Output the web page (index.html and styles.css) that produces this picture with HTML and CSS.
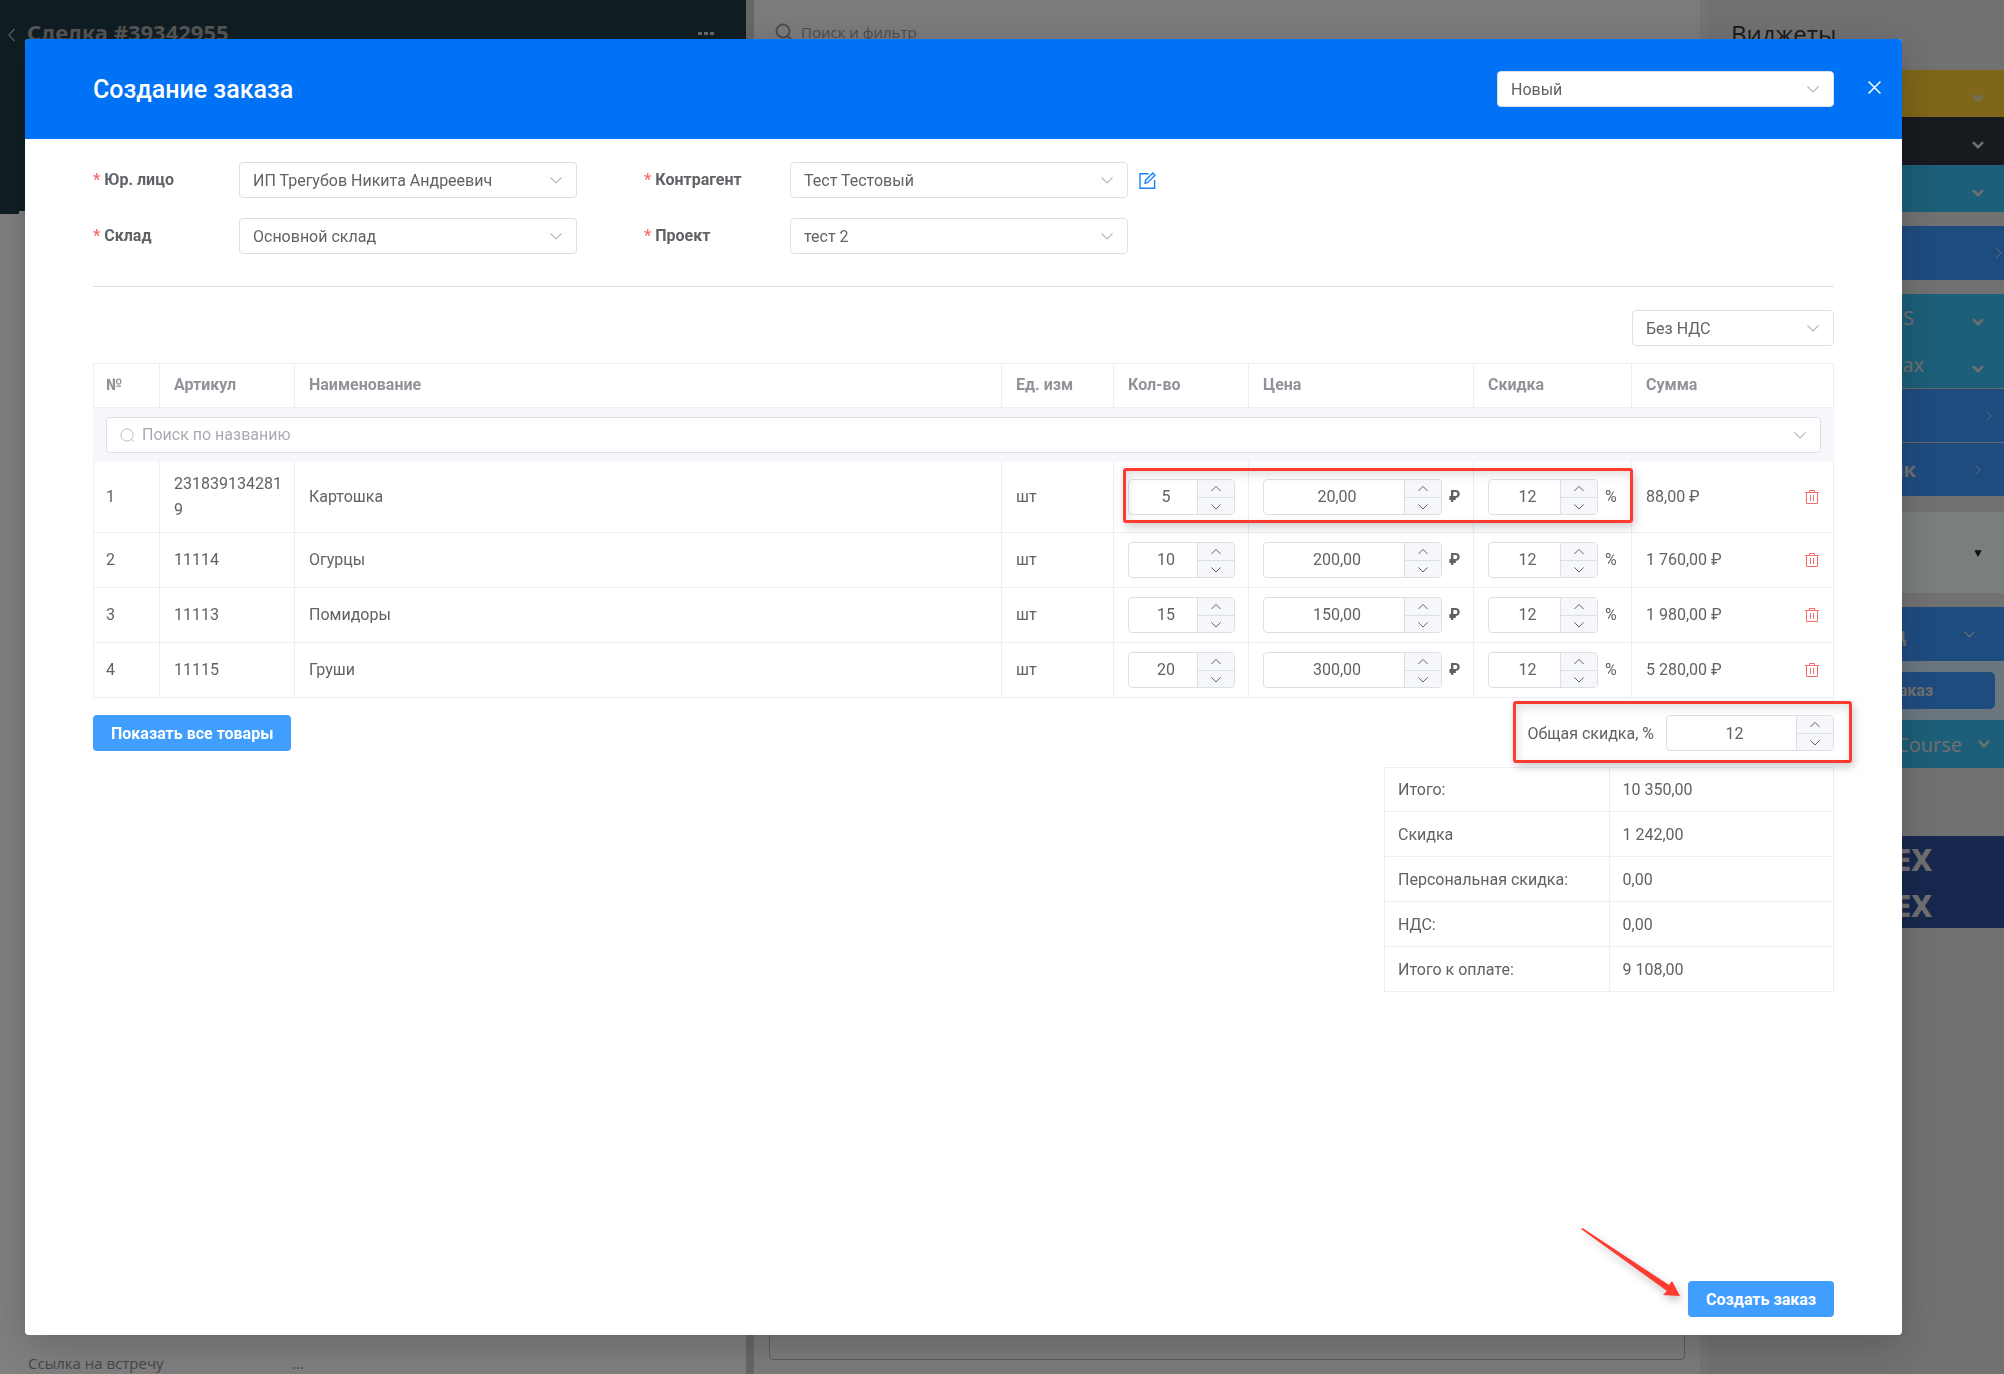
FILE: index.html
```html
<!DOCTYPE html>
<html lang="ru">
<head>
    <meta charset="UTF-8">
    <meta name="viewport" content="width=device-width, initial-scale=1.0">
    <title>Создание заказа</title>
    <link rel="stylesheet" href="styles.css">
</head>
<body>

    <!-- Shared icons -->
    <svg class="sprite" aria-hidden="true">
        <symbol id="i-down" viewBox="0 0 12 8"><path d="M.5 1.5 6 7l5.5-5.5" fill="none" stroke="currentColor" stroke-width="1.2"/></symbol>
        <symbol id="i-up" viewBox="0 0 12 8"><path d="M.5 7 6 1.5 11.5 7" fill="none" stroke="currentColor" stroke-width="1.2"/></symbol>
        <symbol id="i-bold-down" viewBox="0 0 12 8"><path d="M1 1.2l5 5 5-5" fill="none" stroke="currentColor" stroke-width="2.6"/></symbol>
        <symbol id="i-right" viewBox="0 0 8 12"><path d="M1.5.5 7 6l-5.5 5.5" fill="none" stroke="currentColor"/></symbol>
        <symbol id="i-search" viewBox="0 0 16 16"><circle cx="7.5" cy="7.5" r="6.5" fill="none" stroke="currentColor"/><path d="M12 12l3 3" fill="none" stroke="currentColor"/></symbol>
        <symbol id="i-trash" viewBox="0 0 14 14"><path d="M0 2.5h14M4.5 2.5v-2h5v2M1.5 2.5v11h11v-11M5.5 5v6M8.5 5v6" fill="none" stroke="currentColor"/></symbol>
    </svg>

    <!-- Deal card behind the dialog -->
    <div class="page">
        <aside class="deal">
            <header class="deal-header">
                <svg class="deal-back" viewBox="0 0 8 14"><path d="M7 1 1.5 7 7 13" fill="none" stroke="currentColor" stroke-width="1.5"/></svg>
                <h2>Сделка #39342955</h2>
                <span class="deal-more"><i></i><i></i><i></i></span>
            </header>
            <div class="deal-body">
                <div class="deal-field"><span>Ссылка на встречу</span><span>...</span></div>
            </div>
        </aside>
        <main class="feed">
            <div class="feed-search">
                <svg viewBox="0 0 18 18"><circle cx="8" cy="8" r="6.5" fill="none" stroke="currentColor" stroke-width="2"/><path d="M12.5 13l4 4" stroke="currentColor" stroke-width="2"/></svg>
                <span>Поиск и фильтр</span>
            </div>
            <div class="feed-box"></div>
        </main>
        <aside class="widgets">
            <h2>Виджеты</h2>
            <div class="widget yellow"><svg class="bold-arrow"><use href="#i-bold-down"/></svg></div>
            <div class="widget black"><svg class="bold-arrow"><use href="#i-bold-down"/></svg></div>
            <div class="widget teal"><svg class="bold-arrow"><use href="#i-bold-down"/></svg></div>
            <div class="widget blue tall spaced edge"><svg class="right-arrow"><use href="#i-right"/></svg></div>
            <div class="widget teal spaced wide-gap">S<svg class="bold-arrow"><use href="#i-bold-down"/></svg></div>
            <div class="widget teal">лах<svg class="bold-arrow"><use href="#i-bold-down"/></svg></div>
            <div class="widget blue tall lined near"><svg class="right-arrow"><use href="#i-right"/></svg></div>
            <div class="widget blue tall lined wide-gap bold">ик<svg class="right-arrow"><use href="#i-right"/></svg></div>
            <div class="widget grey">▼</div>
            <div class="widget blue tall bold wide-gap">д<svg class="thin-arrow"><use href="#i-down"/></svg></div>
            <div class="widget-action"><button type="button">аказ</button></div>
            <div class="widget teal course">tCourse<svg class="bold-arrow"><use href="#i-bold-down"/></svg></div>
            <div class="widget navy first">EX</div>
            <div class="widget navy">EX</div>
        </aside>
    </div>

    <!-- Order dialog -->
    <div class="overlay">
        <form class="dialog" role="dialog" aria-labelledby="dialog-title">
            <header class="dialog-header">
                <h1 id="dialog-title">Создание заказа</h1>
                <div class="select status">
                    <select aria-label="Статус"><option>Новый</option></select>
                    <svg><use href="#i-down"/></svg>
                </div>
                <button class="close" type="button" aria-label="Закрыть">
                    <svg viewBox="0 0 12 12"><path d="M.5.5l11 11M11.5.5l-11 11" fill="none" stroke="currentColor" stroke-width="1.4"/></svg>
                </button>
            </header>

            <div class="dialog-body">
                <div class="fields">
                    <label for="entity">Юр. лицо</label>
                    <div class="select">
                        <select id="entity"><option>ИП Трегубов Никита Андреевич</option></select>
                        <svg><use href="#i-down"/></svg>
                    </div>
                    <label class="second" for="agent">Контрагент</label>
                    <div class="select">
                        <select id="agent"><option>Тест Тестовый</option></select>
                        <svg><use href="#i-down"/></svg>
                    </div>
                    <button class="edit" type="button" aria-label="Изменить">
                        <svg viewBox="0 0 17 17"><path d="M9.5 1.7H1v14.6h14.6V8M6 11.2l.6-3L13.8 1l2.2 2.2-7.2 7.2z" fill="none" stroke="currentColor" stroke-width="1.4"/></svg>
                    </button>
                    <label for="store">Склад</label>
                    <div class="select">
                        <select id="store"><option>Основной склад</option></select>
                        <svg><use href="#i-down"/></svg>
                    </div>
                    <label class="second" for="project">Проект</label>
                    <div class="select">
                        <select id="project"><option>тест 2</option></select>
                        <svg><use href="#i-down"/></svg>
                    </div>
                </div>

                <div class="vat">
                    <div class="select">
                        <select aria-label="НДС"><option>Без НДС</option></select>
                        <svg><use href="#i-down"/></svg>
                    </div>
                </div>

                <div class="goods-wrap">
                    <table class="goods">
                        <colgroup>
                            <col class="c-num"><col class="c-art"><col><col class="c-unit">
                            <col class="c-qty"><col class="c-price"><col class="c-disc"><col class="c-sum">
                        </colgroup>
                        <thead>
                            <tr>
                                <th>№</th><th>Артикул</th><th>Наименование</th><th>Ед. изм</th>
                                <th>Кол-во</th><th>Цена</th><th>Скидка</th><th>Сумма</th>
                            </tr>
                        </thead>
                        <tbody>
                            <tr class="search-row">
                                <td colspan="8">
                                    <div class="search">
                                        <svg class="search-icon"><use href="#i-search"/></svg>
                                        <input type="text" placeholder="Поиск по названию" aria-label="Поиск по названию">
                                        <svg class="search-arrow"><use href="#i-down"/></svg>
                                    </div>
                                </td>
                            </tr>
                            <tr>
                                <td>1</td><td class="article">2318391342819</td><td>Картошка</td><td>шт</td>
                                <td><div class="number"><input type="text" value="5" aria-label="Количество"><button type="button" aria-label="Больше"><svg><use href="#i-up"/></svg></button><button type="button" aria-label="Меньше"><svg><use href="#i-down"/></svg></button></div></td>
                                <td><div class="with-unit"><div class="number"><input type="text" value="20,00" aria-label="Цена"><button type="button" aria-label="Больше"><svg><use href="#i-up"/></svg></button><button type="button" aria-label="Меньше"><svg><use href="#i-down"/></svg></button></div><b>₽</b></div></td>
                                <td><div class="with-unit"><div class="number"><input type="text" value="12" aria-label="Скидка"><button type="button" aria-label="Больше"><svg><use href="#i-up"/></svg></button><button type="button" aria-label="Меньше"><svg><use href="#i-down"/></svg></button></div>%</div></td>
                                <td><div class="sum">88,00 ₽<button type="button" aria-label="Удалить"><svg><use href="#i-trash"/></svg></button></div></td>
                            </tr>
                            <tr>
                                <td>2</td><td class="article">11114</td><td>Огурцы</td><td>шт</td>
                                <td><div class="number"><input type="text" value="10" aria-label="Количество"><button type="button" aria-label="Больше"><svg><use href="#i-up"/></svg></button><button type="button" aria-label="Меньше"><svg><use href="#i-down"/></svg></button></div></td>
                                <td><div class="with-unit"><div class="number"><input type="text" value="200,00" aria-label="Цена"><button type="button" aria-label="Больше"><svg><use href="#i-up"/></svg></button><button type="button" aria-label="Меньше"><svg><use href="#i-down"/></svg></button></div><b>₽</b></div></td>
                                <td><div class="with-unit"><div class="number"><input type="text" value="12" aria-label="Скидка"><button type="button" aria-label="Больше"><svg><use href="#i-up"/></svg></button><button type="button" aria-label="Меньше"><svg><use href="#i-down"/></svg></button></div>%</div></td>
                                <td><div class="sum">1 760,00 ₽<button type="button" aria-label="Удалить"><svg><use href="#i-trash"/></svg></button></div></td>
                            </tr>
                            <tr>
                                <td>3</td><td class="article">11113</td><td>Помидоры</td><td>шт</td>
                                <td><div class="number"><input type="text" value="15" aria-label="Количество"><button type="button" aria-label="Больше"><svg><use href="#i-up"/></svg></button><button type="button" aria-label="Меньше"><svg><use href="#i-down"/></svg></button></div></td>
                                <td><div class="with-unit"><div class="number"><input type="text" value="150,00" aria-label="Цена"><button type="button" aria-label="Больше"><svg><use href="#i-up"/></svg></button><button type="button" aria-label="Меньше"><svg><use href="#i-down"/></svg></button></div><b>₽</b></div></td>
                                <td><div class="with-unit"><div class="number"><input type="text" value="12" aria-label="Скидка"><button type="button" aria-label="Больше"><svg><use href="#i-up"/></svg></button><button type="button" aria-label="Меньше"><svg><use href="#i-down"/></svg></button></div>%</div></td>
                                <td><div class="sum">1 980,00 ₽<button type="button" aria-label="Удалить"><svg><use href="#i-trash"/></svg></button></div></td>
                            </tr>
                            <tr>
                                <td>4</td><td class="article">11115</td><td>Груши</td><td>шт</td>
                                <td><div class="number"><input type="text" value="20" aria-label="Количество"><button type="button" aria-label="Больше"><svg><use href="#i-up"/></svg></button><button type="button" aria-label="Меньше"><svg><use href="#i-down"/></svg></button></div></td>
                                <td><div class="with-unit"><div class="number"><input type="text" value="300,00" aria-label="Цена"><button type="button" aria-label="Больше"><svg><use href="#i-up"/></svg></button><button type="button" aria-label="Меньше"><svg><use href="#i-down"/></svg></button></div><b>₽</b></div></td>
                                <td><div class="with-unit"><div class="number"><input type="text" value="12" aria-label="Скидка"><button type="button" aria-label="Больше"><svg><use href="#i-up"/></svg></button><button type="button" aria-label="Меньше"><svg><use href="#i-down"/></svg></button></div>%</div></td>
                                <td><div class="sum">5 280,00 ₽<button type="button" aria-label="Удалить"><svg><use href="#i-trash"/></svg></button></div></td>
                            </tr>
                        </tbody>
                    </table>
                    <div class="mark mark-row"></div>
                </div>

                <div class="under-table">
                    <button class="btn" type="button">Показать все товары</button>
                    <div class="total-discount">
                        <label for="total-discount">Общая скидка, %</label>
                        <div class="number"><input id="total-discount" type="text" value="12"><button type="button" aria-label="Больше"><svg><use href="#i-up"/></svg></button><button type="button" aria-label="Меньше"><svg><use href="#i-down"/></svg></button></div>
                        <div class="mark mark-total"></div>
                    </div>
                </div>

                <table class="totals">
                    <tbody>
                        <tr><td>Итого:</td><td>10 350,00</td></tr>
                        <tr><td>Скидка</td><td>1 242,00</td></tr>
                        <tr><td>Персональная скидка:</td><td>0,00</td></tr>
                        <tr><td>НДС:</td><td>0,00</td></tr>
                        <tr><td>Итого к оплате:</td><td>9 108,00</td></tr>
                    </tbody>
                </table>
            </div>

            <footer class="dialog-footer">
                <div class="submit">
                    <svg class="arrow" viewBox="0 0 100 70"><path d="M0 1 1.5 0 88 57 91 53 99 68 82 67 86 63z" fill="#ff3b30"/></svg>
                    <button class="btn" type="button">Создать заказ</button>
                </div>
            </footer>
        </form>
    </div>

</body>
</html>
```

FILE: styles.css
```css
* {
    box-sizing: border-box;
}

body, html {
    margin: 0;
    height: 100%;
    overflow: hidden;
    font-family: Roboto, sans-serif;
    font-size: 16px;
    color: #606266;
}

button, input, select {
    font: inherit;
    color: inherit;
}

button {
    padding: 0;
    border: none;
    background: none;
    cursor: pointer;
}

h1, h2 {
    margin: 0;
}

.sprite {
    display: none;
}

/* Page behind the dialog */
.page {
    display: grid;
    grid-template-columns: 746px 1fr 304px;
    height: 100%;
    overflow: hidden;
    font-family: "Open Sans", sans-serif;
}

.deal {
    display: flex;
    flex-direction: column;
    background: #fff;
}

.deal-header {
    display: flex;
    align-items: flex-start;
    flex: none;
    height: 214px;
    padding: 15px 32px 0 7px;
    background: #203c46;
    color: #a8aaab;
}

.deal-header h2 {
    flex: 1;
    padding-left: 11px;
    font: bold 22px/34px "Noto Sans", sans-serif;
}

.deal-back {
    width: 9px;
    height: 14px;
    margin-top: 13px;
}

.deal-more {
    display: flex;
    gap: 2px;
    margin-top: 17px;
}

.deal-more i {
    width: 4px;
    height: 3px;
    background: #d0d4d6;
}

.deal-body {
    display: flex;
    flex: 1;
    align-items: flex-end;
    margin: -3px 0 0 19px;
    padding: 0 9px;
    background: #fff;
}

.deal-field {
    display: grid;
    grid-template-columns: 264px 1fr;
    font: 15px/22px "Open Sans", sans-serif;
    color: #8b8f92;
}

.feed {
    display: flex;
    flex-direction: column;
    justify-content: space-between;
    padding: 21px 15px 14px;
    border-left: 8px solid #cecece;
    background: #f6f6f6;
}

.feed-search {
    display: flex;
    gap: 8px;
    padding-left: 6px;
    font-size: 15px;
    line-height: 22px;
    color: #999;
}

.feed-search svg {
    width: 18px;
    height: 18px;
    margin-top: 2px;
}

.feed-box {
    height: 90px;
    border: 1px solid #b8b8b8;
    border-radius: 4px;
}

.widgets {
    padding-left: 24px;
    border-left: 7px solid #e9e9e9;
    background: #e3e3e3;
    color: #e0e0e0;
}

.widgets h2 {
    height: 70px;
    padding-top: 17px;
    font: 24px/34px "Open Sans", sans-serif;
    color: #2f333b;
}

.widget {
    display: flex;
    align-items: center;
    justify-content: flex-end;
    gap: 48px;
    height: 47px;
    padding-right: 20px;
    font-size: 20px;
}

.widget svg {
    flex: none;
}

.bold-arrow {
    width: 12px;
    height: 8px;
    margin-top: 8px;
}

.right-arrow {
    width: 7px;
    height: 12px;
}

.thin-arrow {
    width: 11px;
    height: 8px;
}

.widget.tall {
    height: 54px;
}

.widget.wide-gap {
    gap: 58px;
}

.widget.bold {
    padding-right: 23px;
    font-weight: bold;
}

.widget.bold .thin-arrow {
    margin-right: 6px;
}

.widget.edge {
    padding-right: 2px;
}

.widget.near {
    padding-right: 12px;
}

.widget.spaced {
    margin-top: 14px;
}

.widget.lined {
    border-top: 1px solid #d0d0d0;
}

.widget.yellow {
    background: #ffcc30;
}

.widget.black {
    height: 48px;
    background: #2f343e;
}

.widget.teal {
    background: #3abdf0;
}

.widget.blue {
    background: #3e99ff;
}

.widget.grey {
    height: 81px;
    margin: 16px 0 14px;
    background: #f0fefc;
    color: #222;
    font-size: 12px;
}

.widget-action {
    height: 59px;
    padding: 11px 9px;
    background: #d6ecff;
}

.widget-action button {
    width: 100%;
    height: 37px;
    padding-right: 62px;
    border-radius: 5px;
    background: #3e99ff;
    font: bold 16px Roboto, sans-serif;
    text-align: right;
}

.widget.course {
    gap: 16px;
    height: 48px;
    padding-right: 14px;
}

.course .bold-arrow {
    margin-top: 0;
}

.widget.navy {
    height: 46px;
    padding-right: 72px;
    border-top: 1px solid #30569e;
    background: #2e509e;
    font: 800 30px/44px "Noto Sans", sans-serif;
}

.widget.navy.first {
    margin-top: 68px;
}

/* Dialog */
.overlay {
    position: fixed;
    inset: 0;
    display: flex;
    padding: 39px 102px 39px 25px;
    background: rgba(0, 0, 0, 0.5);
}

.dialog {
    display: flex;
    flex: 1;
    flex-direction: column;
    border-radius: 4px;
    background: #fff;
    box-shadow: 0 10px 40px rgba(0, 0, 0, 0.2);
    overflow: hidden;
}

.dialog-header {
    display: flex;
    align-items: center;
    height: 100px;
    padding: 0 20px 0 68px;
    background: #0072f5;
    color: #fff;
}

.dialog-header h1 {
    flex: 1;
    font-size: 25px;
    font-weight: 500;
}

.status {
    width: 337px;
    color: #606266;
}

.close {
    width: 14px;
    padding-bottom: 4px;
    margin-left: 34px;
}

.close svg {
    display: block;
    width: 13px;
    height: 13px;
}

.dialog-body {
    flex: 1;
    padding: 23px 68px 0;
}

.select {
    display: grid;
    align-items: center;
}

.select > * {
    grid-area: 1 / 1;
}

.select select {
    width: 100%;
    height: 36px;
    padding: 0 40px 0 13px;
    border: 1px solid #dcdfe6;
    border-radius: 4px;
    background: #fff;
    appearance: none;
}

.select svg {
    justify-self: end;
    width: 12px;
    height: 8px;
    margin-right: 15px;
    color: #b4b8c0;
    pointer-events: none;
}

.fields {
    display: grid;
    grid-template-columns: 146px 338px 213px 338px 28px;
    row-gap: 20px;
    padding-bottom: 32px;
    border-bottom: 1px solid #dcdfe6;
}

.fields label {
    grid-column: 1;
    font-weight: bold;
    line-height: 36px;
}

.fields label.second {
    grid-column: 3;
    padding-left: 67px;
}

.fields label::before {
    content: "*";
    margin-right: 4px;
    color: #f56c6c;
}

.edit {
    padding-left: 11px;
    color: #1684fc;
}

.edit svg {
    display: block;
    width: 17px;
    height: 17px;
}

.vat {
    display: flex;
    justify-content: flex-end;
    padding: 23px 0 17px;
}

.vat .select {
    width: 202px;
}

/* Goods table */
.goods-wrap {
    position: relative;
}

.goods {
    width: 100%;
    border-spacing: 0;
    table-layout: fixed;
}

.c-num { width: 67px; }
.c-art { width: 135px; }
.c-unit { width: 112px; }
.c-qty { width: 135px; }
.c-price { width: 225px; }
.c-disc { width: 158px; }
.c-sum { width: 202px; }

.goods th, .goods td {
    padding: 9px 12px 9px 14px;
    border: solid #ebeef5;
    border-width: 0 1px 1px 0;
    line-height: 26px;
    text-align: left;
}

.goods th:first-child, .goods td:first-child {
    padding-left: 12px;
    border-left-width: 1px;
}

.goods th {
    padding-top: 8px;
    height: 45px;
    border-top-width: 1px;
    color: #909399;
}

.goods .search-row td {
    padding: 9px 12px;
    border-color: #f5f7fa;
    border-bottom: none;
    background: #f5f7fa;
}

.article {
    word-break: break-all;
}

.search {
    display: flex;
    align-items: center;
    height: 36px;
    padding: 0 14px 0 13px;
    border: 1px solid #dcdfe6;
    border-radius: 4px;
    background: #fff;
    color: #b4b8c0;
}

.search input {
    flex: 1;
    margin-left: 7px;
    padding: 0;
    border: none;
    outline: none;
}

.search input::placeholder {
    color: #a8abb2;
}

.search-icon {
    width: 15px;
    height: 15px;
}

.search-arrow {
    width: 12px;
    height: 8px;
}

.number {
    display: grid;
    flex: 1;
    grid-template: 17px 17px / 1fr 37px;
    height: 36px;
    border: 1px solid #dcdfe6;
    border-radius: 4px;
    background: #fff;
    overflow: hidden;
}

.number input {
    grid-row: 1 / 3;
    width: 100%;
    min-width: 0;
    padding: 0 0 0 6px;
    border: none;
    background: none;
    text-align: center;
}

.number button {
    display: flex;
    align-items: center;
    justify-content: center;
    border-left: 1px solid #dcdfe6;
    background: #f5f7fa;
}

.number button + button {
    border-top: 1px solid #dcdfe6;
}

.number svg {
    width: 10px;
    height: 7px;
    color: #606266;
}

.with-unit {
    display: flex;
    align-items: center;
    gap: 7px;
}

.goods td:nth-child(5) {
    padding-right: 13px;
}

.goods td:nth-child(6) .number {
    flex: 0 0 179px;
}

.goods td:nth-child(7) .number {
    flex: 0 0 110px;
}

.sum {
    display: flex;
    align-items: center;
    justify-content: space-between;
}

.sum button {
    margin-right: 2px;
    color: #f56c6c;
}

.sum svg {
    display: block;
    width: 14px;
    height: 14px;
}

/* Red highlights */
.mark {
    position: absolute;
    border: 3px solid #ff3b30;
    border-radius: 3px;
    box-shadow: 2px 4px 10px rgba(0, 0, 0, 0.2), inset 2px 4px 10px rgba(0, 0, 0, 0.12);
    pointer-events: none;
}

.mark-row {
    top: 105px;
    right: 201px;
    width: 510px;
    height: 55px;
}

.mark-total {
    inset: -14px -18px -12px -14px;
}

.btn {
    height: 36px;
    padding: 0 18px;
    border-radius: 4px;
    background: #409eff;
    color: #fff;
    font-weight: bold;
}

.under-table {
    display: flex;
    justify-content: space-between;
    padding: 17px 0 16px;
}

.total-discount {
    position: relative;
    display: flex;
    align-items: center;
    gap: 12px;
}

.total-discount .number {
    flex: none;
    width: 168px;
}

.totals {
    width: 450px;
    margin-left: auto;
    border-spacing: 0;
    table-layout: fixed;
    border: solid #ebeef5;
    border-width: 1px 0 0 1px;
}

.totals td {
    height: 45px;
    padding: 0 13px;
    border: solid #ebeef5;
    border-width: 0 1px 1px 0;
}

.totals tr:first-child td {
    height: 44px;
}

/* Footer */
.dialog-footer {
    display: flex;
    justify-content: flex-end;
    padding: 0 68px 18px;
}

.submit {
    position: relative;
}

.arrow {
    position: absolute;
    right: calc(100% + 7px);
    bottom: 19px;
    width: 100px;
    height: 70px;
    filter: drop-shadow(2px 4px 4px rgba(0, 0, 0, 0.25));
    overflow: visible;
}
```
